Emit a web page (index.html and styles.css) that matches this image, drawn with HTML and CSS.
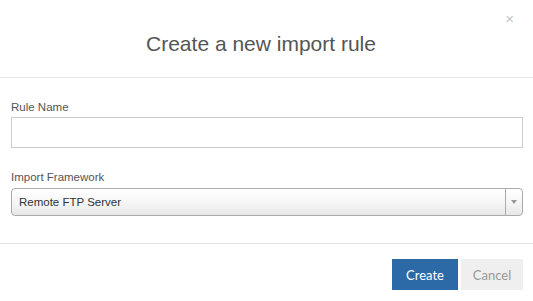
FILE: index.html
```html
<!DOCTYPE html>
<html lang="en">
<head>
  <meta charset="UTF-8">
  <meta name="viewport" content="width=device-width, initial-scale=1.0">
  <title>Create a new import rule</title>

  <link rel="stylesheet" href="styles.css">
</head>
<body>

  <!-- Modal dialog -->
  <div class="modal">
    <div class="modal-header">
      <button class="close-btn">&times;</button>
      <h4 class="modal-title">Create a new import rule</h4>
    </div>

    <div class="modal-body">
      <label class="field-label" for="rule-name">Rule Name</label>
      <input type="text" id="rule-name" class="text-input">

      <label class="field-label second">Import Framework</label>
      <div class="select-box">
        <span class="select-value">Remote FTP Server</span>
        <div class="select-arrow"><b></b></div>
      </div>
    </div>

    <div class="modal-footer">
      <button class="btn btn-primary">Create</button>
      <button class="btn btn-cancel">Cancel</button>
    </div>
  </div>

</body>
</html>
```

FILE: styles.css
```css
* {
  margin: 0;
  padding: 0;
  box-sizing: border-box;
}

body {
  font-family: "Liberation Sans", Arial, sans-serif;
  background: white;
  width: 533px;
  height: 301px;
  overflow: hidden;
}

.modal {
  display: flex;
  flex-direction: column;
  background: white;
}

.modal-header {
  position: relative;
  padding: 32px 26px 21px 15px;
  border-bottom: 1px solid #e5e5e5;
}

.modal-title {
  font-size: 21px;
  font-weight: normal;
  line-height: 24px;
  color: #555;
  text-align: center;
}

.close-btn {
  position: absolute;
  top: 11px;
  right: 19px;
  font-family: "Liberation Sans", Arial, sans-serif;
  font-size: 15px;
  line-height: 16px;
  color: #c4c4c4;
  background: transparent;
  border: none;
  cursor: pointer;
}

.modal-body {
  display: flex;
  flex-direction: column;
  padding: 22px 10px 27px 11px;
}

.field-label {
  font-size: 11.5px;
  line-height: 14px;
  color: #555;
  margin-bottom: 3px;
}

.field-label.second {
  margin-top: 22px;
  margin-bottom: 4px;
}

.text-input {
  height: 31px;
  width: 100%;
  border: 1px solid #ccc;
  font-size: 12px;
  padding: 0 8px;
  outline: none;
}

.select-box {
  display: flex;
  align-items: center;
  height: 28px;
  border: 1px solid #aaa;
  border-radius: 4px;
  background: linear-gradient(to bottom, #ffffff 0%, #f6f6f6 50%, #e8e8e8 100%);
}

.select-value {
  flex: 1;
  padding-left: 7px;
  font-size: 11.5px;
  color: #333;
}

.select-arrow {
  width: 17px;
  height: 100%;
  border-left: 1px solid #aaa;
  display: flex;
  justify-content: center;
  align-items: center;
}

.select-arrow b {
  width: 0;
  height: 0;
  border-left: 3px solid transparent;
  border-right: 3px solid transparent;
  border-top: 4px solid #999;
}

.modal-footer {
  display: flex;
  justify-content: flex-end;
  gap: 3px;
  padding: 15px 10px 11px 10px;
  border-top: 1px solid #e5e5e5;
}

.btn {
  height: 31px;
  border: none;
  font-family: Lato, "Open Sans", sans-serif;
  font-size: 13px;
  cursor: pointer;
}

.btn-primary {
  width: 66px;
  background-color: #2b6aa6;
  color: white;
}

.btn-cancel {
  width: 62px;
  background-color: #efefef;
  color: #999;
}
```
